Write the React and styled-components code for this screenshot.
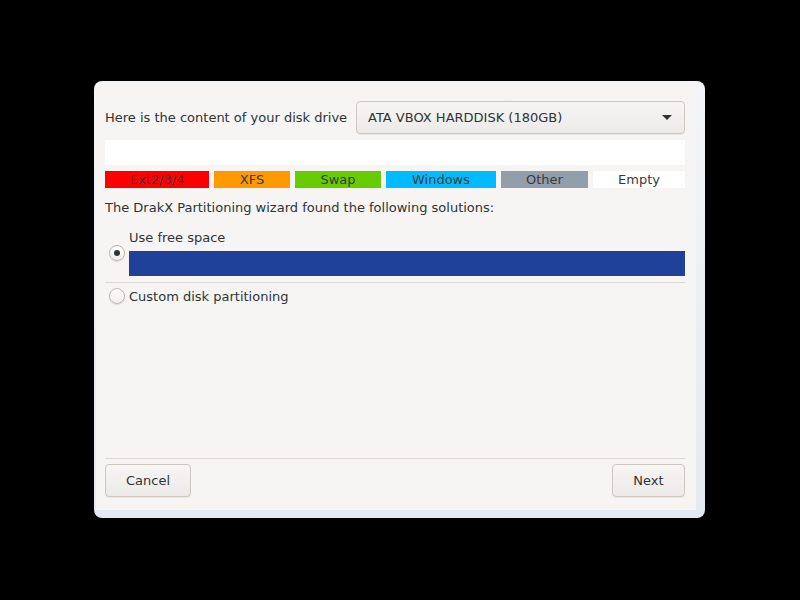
import React from 'react';
import styled, { createGlobalStyle } from 'styled-components';

const Global = createGlobalStyle`
  html, body { margin: 0; padding: 0; background: #000; }
  body { font-family: "DejaVu Sans", sans-serif; font-size: 13px; color: #2e3436; }
`;

const Screen = styled.div`
  width: 800px;
  height: 600px;
  display: flex;
  align-items: flex-start;
  padding: 81px 0 0 94px;
  box-sizing: border-box;
`;

const Frame = styled.div`
  width: 611px;
  height: 437px;
  box-sizing: border-box;
  border-radius: 8px;
  background: linear-gradient(#f3f5f8, #e4eaf1);
  padding: 2px 9px 8px 2px;
  display: flex;
`;

const Body = styled.div`
  flex: 1;
  background: #f6f5f4;
  border-radius: 6px 0 0 0;
  padding: 17px 11px 13px 9px;
  display: flex;
  flex-direction: column;
`;

const TopRow = styled.div`
  display: flex;
  align-items: center;
  justify-content: space-between;
  height: 34px;
`;

const Label = styled.span`
  white-space: nowrap;
`;

const Combo = styled.div`
  width: 329px;
  height: 33px;
  box-sizing: border-box;
  border: 1px solid #cdc7c2;
  border-radius: 4px;
  background: linear-gradient(#f6f5f4, #edebe9);
  display: flex;
  align-items: center;
  justify-content: space-between;
  padding: 0 12px 0 11px;
  box-shadow: 0 1px rgba(0,0,0,0.05);
`;

const Arrow = styled.span`
  width: 0;
  height: 0;
  border-left: 5px solid transparent;
  border-right: 5px solid transparent;
  border-top: 5px solid #2e3436;
`;

const DiskBar = styled.div`
  height: 25px;
  background: #fff;
  margin-top: 6px;
`;

const Legend = styled.div`
  display: flex;
  gap: 5px;
  margin-top: 6px;
`;

const Swatch = styled.div`
  width: ${p => p.w}px;
  height: 17px;
  background: ${p => p.bg};
  color: #3a3a3a;
  display: flex;
  align-items: center;
  justify-content: center;
  line-height: 17px;
`;

const Info = styled.div`
  margin-top: 12px;
  line-height: 16px;
`;

const Option = styled.div`
  display: flex;
  align-items: center;
  gap: 4px;
  padding-left: 4px;
  margin-top: ${p => p.mt}px;
`;

const Radio = styled.span`
  width: 14px;
  height: 14px;
  flex: none;
  border-radius: 50%;
  border: 1px solid #bfb8b1;
  background: linear-gradient(#ffffff, #f0eeec);
  box-shadow: 0 1px 1px rgba(0,0,0,0.1);
  display: flex;
  align-items: center;
  justify-content: center;
  &::after {
    content: '';
    width: 6px;
    height: 6px;
    border-radius: 50%;
    background: ${p => (p.checked ? '#2e3436' : 'transparent')};
  }
`;

const OptionBody = styled.div`
  flex: 1;
  display: flex;
  flex-direction: column;
`;

const BlueBar = styled.div`
  height: 25px;
  background: #20419a;
  margin-top: 6px;
`;

const Separator = styled.div`
  height: 1px;
  background: #dcd9d6;
  margin-top: ${p => p.mt}px;
`;

const Spacer = styled.div`
  flex: 1;
`;

const Buttons = styled.div`
  display: flex;
  justify-content: space-between;
  margin-top: 5px;
`;

const Button = styled.button`
  font-family: inherit;
  font-size: 13px;
  color: #2e3436;
  height: 33px;
  width: ${p => p.w}px;
  border: 1px solid #cdc7c2;
  border-radius: 4px;
  background: linear-gradient(#f6f5f4, #edebe9);
  box-shadow: 0 1px rgba(0,0,0,0.05);
`;

const parts = [
  { name: 'Ext2/3/4', bg: '#ff0000', w: 104 },
  { name: 'XFS', bg: '#ff9900', w: 76 },
  { name: 'Swap', bg: '#66cc00', w: 86 },
  { name: 'Windows', bg: '#00bbff', w: 110 },
  { name: 'Other', bg: '#939eab', w: 87 },
  { name: 'Empty', bg: '#ffffff', w: 92 },
];

export default function App() {
  return (
    <>
      <Global />
      <Screen>
        <Frame>
          <Body>
            <TopRow>
              <Label>Here is the content of your disk drive</Label>
              <Combo>
                <span>ATA VBOX HARDDISK (180GB)</span>
                <Arrow />
              </Combo>
            </TopRow>
            <DiskBar />
            <Legend>
              {parts.map(p => (
                <Swatch key={p.name} bg={p.bg} w={p.w}>{p.name}</Swatch>
              ))}
            </Legend>
            <Info>The DrakX Partitioning wizard found the following solutions:</Info>
            <Option mt={14}>
              <Radio checked />
              <OptionBody>
                <span>Use free space</span>
                <BlueBar />
              </OptionBody>
            </Option>
            <Separator mt={6} />
            <Option mt={5}>
              <Radio />
              <span>Custom disk partitioning</span>
            </Option>
            <Spacer />
            <Separator mt={0} />
            <Buttons>
              <Button w={86}>Cancel</Button>
              <Button w={73}>Next</Button>
            </Buttons>
          </Body>
        </Frame>
      </Screen>
    </>
  );
}
